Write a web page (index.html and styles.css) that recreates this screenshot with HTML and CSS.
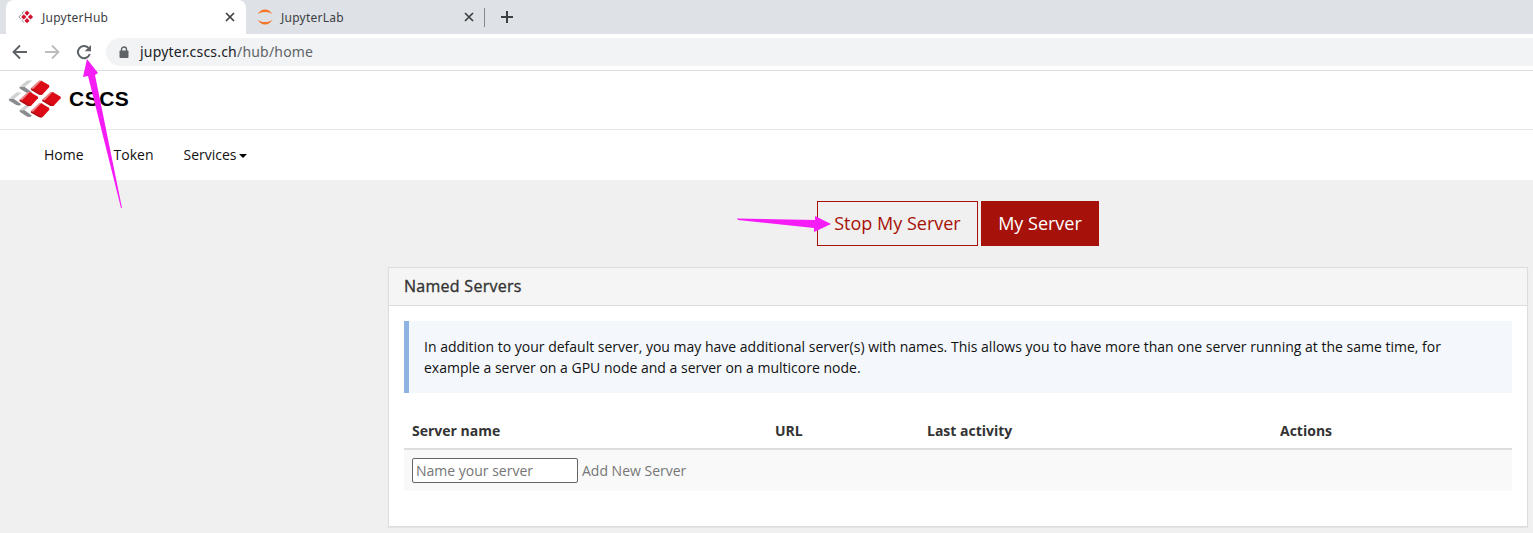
FILE: index.html
```html
<!DOCTYPE html>
<html lang="en">
<head>
<meta charset="utf-8">
<title>JupyterHub</title>
<link rel="stylesheet" href="styles.css">
</head>
<body>
<svg class="defs" width="0" height="0" aria-hidden="true">
  <symbol id="cube" viewBox="0 0 56 44">
    <path fill="#e9878a" d="M0 24 26 0 36 1 10 28z"/>
    <path fill="#dc0a14" d="M7 27 32 1 56 15V20L34 44 28 43z"/>
    <path fill="#b80d15" d="M0 24 8 26 33 40 30 44 25 43 1 29z"/>
  </symbol>
  <symbol id="shade" viewBox="0 0 40 40">
    <path fill="#cfd1d3" d="M0 20 24 0H40L16 20z"/>
    <path fill="#898c8e" d="M0 20 16 20 38 36 32 40 24 39 2 25z"/>
  </symbol>
  <symbol id="close" viewBox="0 0 10 10"><path d="m1 1 8 8M9 1 1 9" stroke="#3c4043" stroke-width="1.7"/></symbol>
</svg>
<div class="tabs">
  <div class="tab active">
    <svg class="favicon" viewBox="0 0 16 16"><path fill="#cf1430" d="m9 1.500 2.500 2.600L9 6.700 6.500 4.100zM5.800 5.200l2.600 2.700-2.600 2.600-2.600-2.600zM12.500 5.200l2.600 2.700-2.600 2.600-2.600-2.600zM9 9.100l2.500 2.600L9 14.300l-2.500-2.600z"/><path d="M6.500 2 4 4l1 1M3.200 5.500.8 8l2.400 2.300M4.700 10.500 4 11.700l2.200 2" fill="none" stroke="#999"/></svg>
    <span class="tab-title">JupyterHub</span>
    <svg class="close"><use href="#close"/></svg>
  </div>
  <div class="tab">
    <svg class="favicon" viewBox="0 0 16 16" fill="#f37726"><path d="M.8 5.200C2.200 2.200 4.800.5 8 .5s5.800 1.700 7.200 4.700C13.500 3.600 11 2.900 8 2.900S2.500 3.600.8 5.200z"/><path d="M.8 10.800C2.200 13.800 4.800 15.500 8 15.500s5.800-1.700 7.200-4.700C13.500 12.400 11 13.100 8 13.100S2.500 12.400.8 10.800z"/></svg>
    <span class="tab-title">JupyterLab</span>
    <svg class="close"><use href="#close"/></svg>
  </div>
  <span class="divider"></span>
  <svg class="plus" viewBox="0 0 12 12"><path d="M6 0v12M0 6h12" stroke="#3c4043" stroke-width="2"/></svg>
</div>
<div class="toolbar">
  <svg class="nav-icon" viewBox="0 0 16 16" fill="none" stroke="#5f6368" stroke-width="1.900"><path d="M15 8H2M8 1.500 1.500 8 8 14.500"/></svg>
  <svg class="nav-icon" viewBox="0 0 16 16" fill="none" stroke="#babcbe" stroke-width="1.800"><path d="M1 8h13M8 1.500 14.500 8 8 14.500"/></svg>
  <svg class="nav-icon" viewBox="0 0 16 16" fill="none" stroke="#5f6368" stroke-width="2"><path d="M13.800 10A6.100 6.100 0 1 1 12.500 3.900"/><path fill="#5f6368" stroke="none" d="M15 1v6.300H8.700z"/></svg>
  <div class="address">
    <svg class="lock" viewBox="0 0 10 13"><path d="M2.500 6V3.500a2.500 2.500 0 0 1 5 0V6" fill="none" stroke="#5f6368" stroke-width="1.400"/><rect x=".5" y="4.500" width="9" height="7.500" rx="1" fill="#5f6368"/></svg>
    <span class="url">jupyter.cscs.ch<span class="path">/hub/home</span></span>
  </div>
</div>
<header class="header">
  <svg class="logo" viewBox="0 0 162 114">
    <use href="#shade" x="33" y="1" width="42" height="40"/>
    <use href="#shade" x="1" y="37" width="42" height="40"/>
    <use href="#shade" x="33" y="71" width="42" height="40"/>
    <use href="#cube" x="67" y="1" width="58" height="44"/>
    <use href="#cube" x="33" y="35" width="58" height="44"/>
    <use href="#cube" x="101" y="35" width="58" height="44"/>
    <use href="#cube" x="67" y="69" width="58" height="44"/>
  </svg>
  <span class="brand">CSCS</span>
</header>
<nav class="nav"><a>Home</a><a>Token</a><a>Services<i class="caret"></i></a></nav>
<main class="main">
  <div class="buttons"><a class="btn">Stop My Server</a><a class="btn primary">My Server</a></div>
  <section class="panel">
    <h2 class="panel-title">Named Servers</h2>
    <div class="panel-body">
      <p class="callout">In addition to your default server, you may have additional server(s) with names. This allows you to have more than one server running at the same time, for example a server on a GPU node and a server on a multicore node.</p>
      <div class="row head"><span>Server name</span><span>URL</span><span>Last activity</span><span>Actions</span></div>
      <div class="row new"><div class="new-server"><input class="name" placeholder="Name your server"><span>Add New Server</span></div></div>
    </div>
  </section>
</main>
<svg class="arrows" width="1533" height="533" viewBox="0 0 1533 533" fill="#f51cf5">
  <path d="M87 59 98 73 95 75 122 208 121 208 88 76 83 77z"/>
  <path d="M737 218.500 815 220 815 216 831 224 814 232 814 228 738 220z"/>
</svg>
</body>
</html>
```
FILE: styles.css
```css
* { box-sizing: border-box; }
body { margin: 0; width: 1533px; height: 533px; overflow: hidden; background: #f0f0f0; color: #333; font: 14px/20px "Open Sans", sans-serif; }
svg { display: block; flex: none; }
.defs { position: absolute; }
.tabs { display: flex; align-items: center; height: 34px; padding-left: 6px; background: #dee1e6; }
.tab { display: flex; align-items: center; width: 240px; height: 34px; padding: 0 11px 0 12px; color: #3c4043; font: 12px/16px "Noto Sans", sans-serif; letter-spacing: .25px; }
.tab.active { background: #fff; border-radius: 8px 8px 0 0; }
.tab + .tab { width: 238px; padding: 0 10px 0 11px; }
.favicon { width: 16px; height: 16px; margin-right: 8px; }
.tab-title { flex: 1; padding-top: 2px; }
.close { width: 10px; height: 10px; }
.divider { width: 1px; height: 19px; background: #85888c; }
.plus { width: 12px; height: 12px; margin-left: 16px; }
.toolbar { display: flex; align-items: center; height: 37px; padding-left: 12px; background: #fff; border-bottom: 1px solid #dadce0; }
.nav-icon { width: 16px; height: 16px; margin-right: 16px; }
.address { display: flex; align-items: center; flex: 1; height: 28px; margin-left: -2px; padding-left: 13px; border-radius: 14px 0 0 14px; background: #f1f3f4; }
.lock { width: 10px; height: 13px; margin-right: 11px; }
.url { color: #202124; font: 14px/20px "Noto Sans", sans-serif; letter-spacing: .2px; }
.path { color: #5f6368; }
.header { display: flex; align-items: center; height: 59px; padding: 0 0 2px 8px; background: #fff; border-bottom: 1px solid #e7e7e7; }
.logo { width: 54px; height: 38px; }
.brand { margin: -1px 0 0 7px; color: #000; font: bold 21px/24px "Liberation Sans", sans-serif; letter-spacing: .5px; }
.nav { display: flex; align-items: center; gap: 30px; height: 50px; padding-left: 44px; background: #fff; color: #111; }
.nav a { display: flex; align-items: center; }
.caret { margin: 2px 0 0 2px; border: 4px solid transparent; border-top-color: #000; border-bottom: 0; }
.main { padding: 21px 5px 0 388px; }
.buttons { display: flex; justify-content: center; gap: 3px; height: 45px; }
.btn { display: flex; align-items: center; justify-content: center; width: 161px; padding-bottom: 2px; border: 1px solid #a61109; color: #a61109; font-size: 18px; }
.btn.primary { width: 118px; background: #a61109; color: #fff; }
.panel { height: 260px; margin-top: 21px; background: #fff; border: 1px solid #ddd; box-shadow: 0 1px 1px rgba(0,0,0,.05); }
.panel-title { height: 38px; margin: 0; padding: 0 15px; border-bottom: 1px solid #ddd; background: #f5f5f5; font-size: 16px; font-weight: 400; line-height: 37px; letter-spacing: .28px; -webkit-text-stroke: .35px #333; }
.panel-body { padding: 15px; }
.callout { height: 72px; margin: 0 0 20px; padding: 15px; border-left: 5px solid #8cb3e2; background: #f4f8fd; color: #111; line-height: 21px; }
.row { display: grid; grid-template-columns: 363px 152px 353px 1fr; align-items: center; padding: 0 8px; }
.row.head { height: 37px; border-bottom: 2px solid #ddd; font-weight: 700; }
.row.new { height: 41px; background: #f9f9f9; color: #777; }
.new-server { display: flex; align-items: center; gap: 4px; }
.name { width: 166px; height: 25px; padding: 1px 3px; border: 1px solid #666; border-radius: 2px; background: #fff; font: inherit; }
.name::placeholder { color: #757575; }
.arrows { position: absolute; left: 0; top: 0; }
```
